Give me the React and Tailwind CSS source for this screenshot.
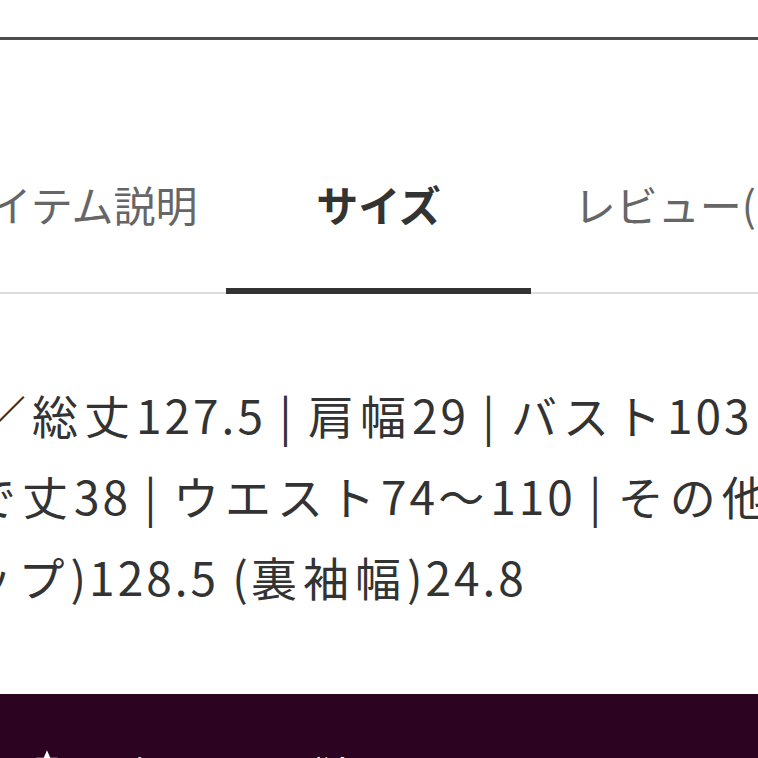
import React from 'react'

const tabs = [
  { label: 'アイテム説明', active: false },
  { label: 'サイズ', active: true },
  { label: 'レビュー(1)', active: false },
]

// size spec lines, cut at the left edge of the panel
const lines = [
  { text: '／総丈127.5 | 肩幅29 | バスト103', offset: '-ml-[20px]' },
  { text: 'そで丈38 | ウエスト74〜110 | その他', offset: '-ml-[82px]' },
  { text: '(ヒップ)128.5 (裏袖幅)24.8', offset: '-ml-[104px]' },
]

// latin runs (digits, brackets, bars) get tighter tracking than kana/kanji
function SpecLine({ text }) {
  const parts = text.split(/([\x20-\x7E]+)/).filter(Boolean)
  return parts.map((p, i) =>
    /^[\x20-\x7E]+$/.test(p) ? (
      <span key={i} className="tracking-[3px]">{p}</span>
    ) : (
      <span key={i} className="tracking-[6px]">{p}</span>
    )
  )
}

export default function App() {
  return (
    <div
      className="w-[758px] h-[758px] overflow-hidden bg-white flex flex-col"
      style={{ fontFamily: '"Noto Sans CJK JP", "Noto Sans", sans-serif' }}
    >
      <div className="h-[37px] shrink-0" />
      <div className="h-[3px] shrink-0 bg-[#4d4d4d]" />

      {/* Tabs */}
      <div className="h-[254px] shrink-0 border-b-2 border-[#dcdcdc] flex -ml-[79px]">
        {tabs.map((t) => (
          <div
            key={t.label}
            className={
              t.active
                ? 'w-[305px] shrink-0 flex flex-col items-center border-b-[6px] border-[#333] -mb-[2px]'
                : 'w-[305px] shrink-0 flex flex-col items-center'
            }
          >
            <span
              className={
                t.active
                  ? 'mt-[140px] text-[42px] leading-[48px] font-bold text-[#333] whitespace-nowrap'
                  : 'mt-[140px] text-[42px] leading-[48px] text-[#666] whitespace-nowrap'
              }
            >
              {t.label}
            </span>
          </div>
        ))}
      </div>

      {/* Size details */}
      <div className="flex-1 pt-[80px] text-[#333]">
        {lines.map((l) => (
          <div key={l.text} className={`${l.offset} whitespace-nowrap text-[46px] leading-[81px]`}>
            <SpecLine text={l.text} />
          </div>
        ))}
      </div>

      {/* Bottom action bar */}
      <div className="h-[64px] shrink-0 bg-[#2c0422] flex items-start pt-[54px] pl-[34px] gap-[36px] text-white">
        <svg width="26" height="26" viewBox="0 0 24 24" fill="white">
          <path d="M12 2l3 7h7l-5.5 4.5L18.5 21 12 16.5 5.5 21l2-7.5L2 9h7z" />
        </svg>
        <span className="mt-[4px] text-[34px] leading-[40px] whitespace-nowrap">お気に入りに登録</span>
      </div>
    </div>
  )
}
